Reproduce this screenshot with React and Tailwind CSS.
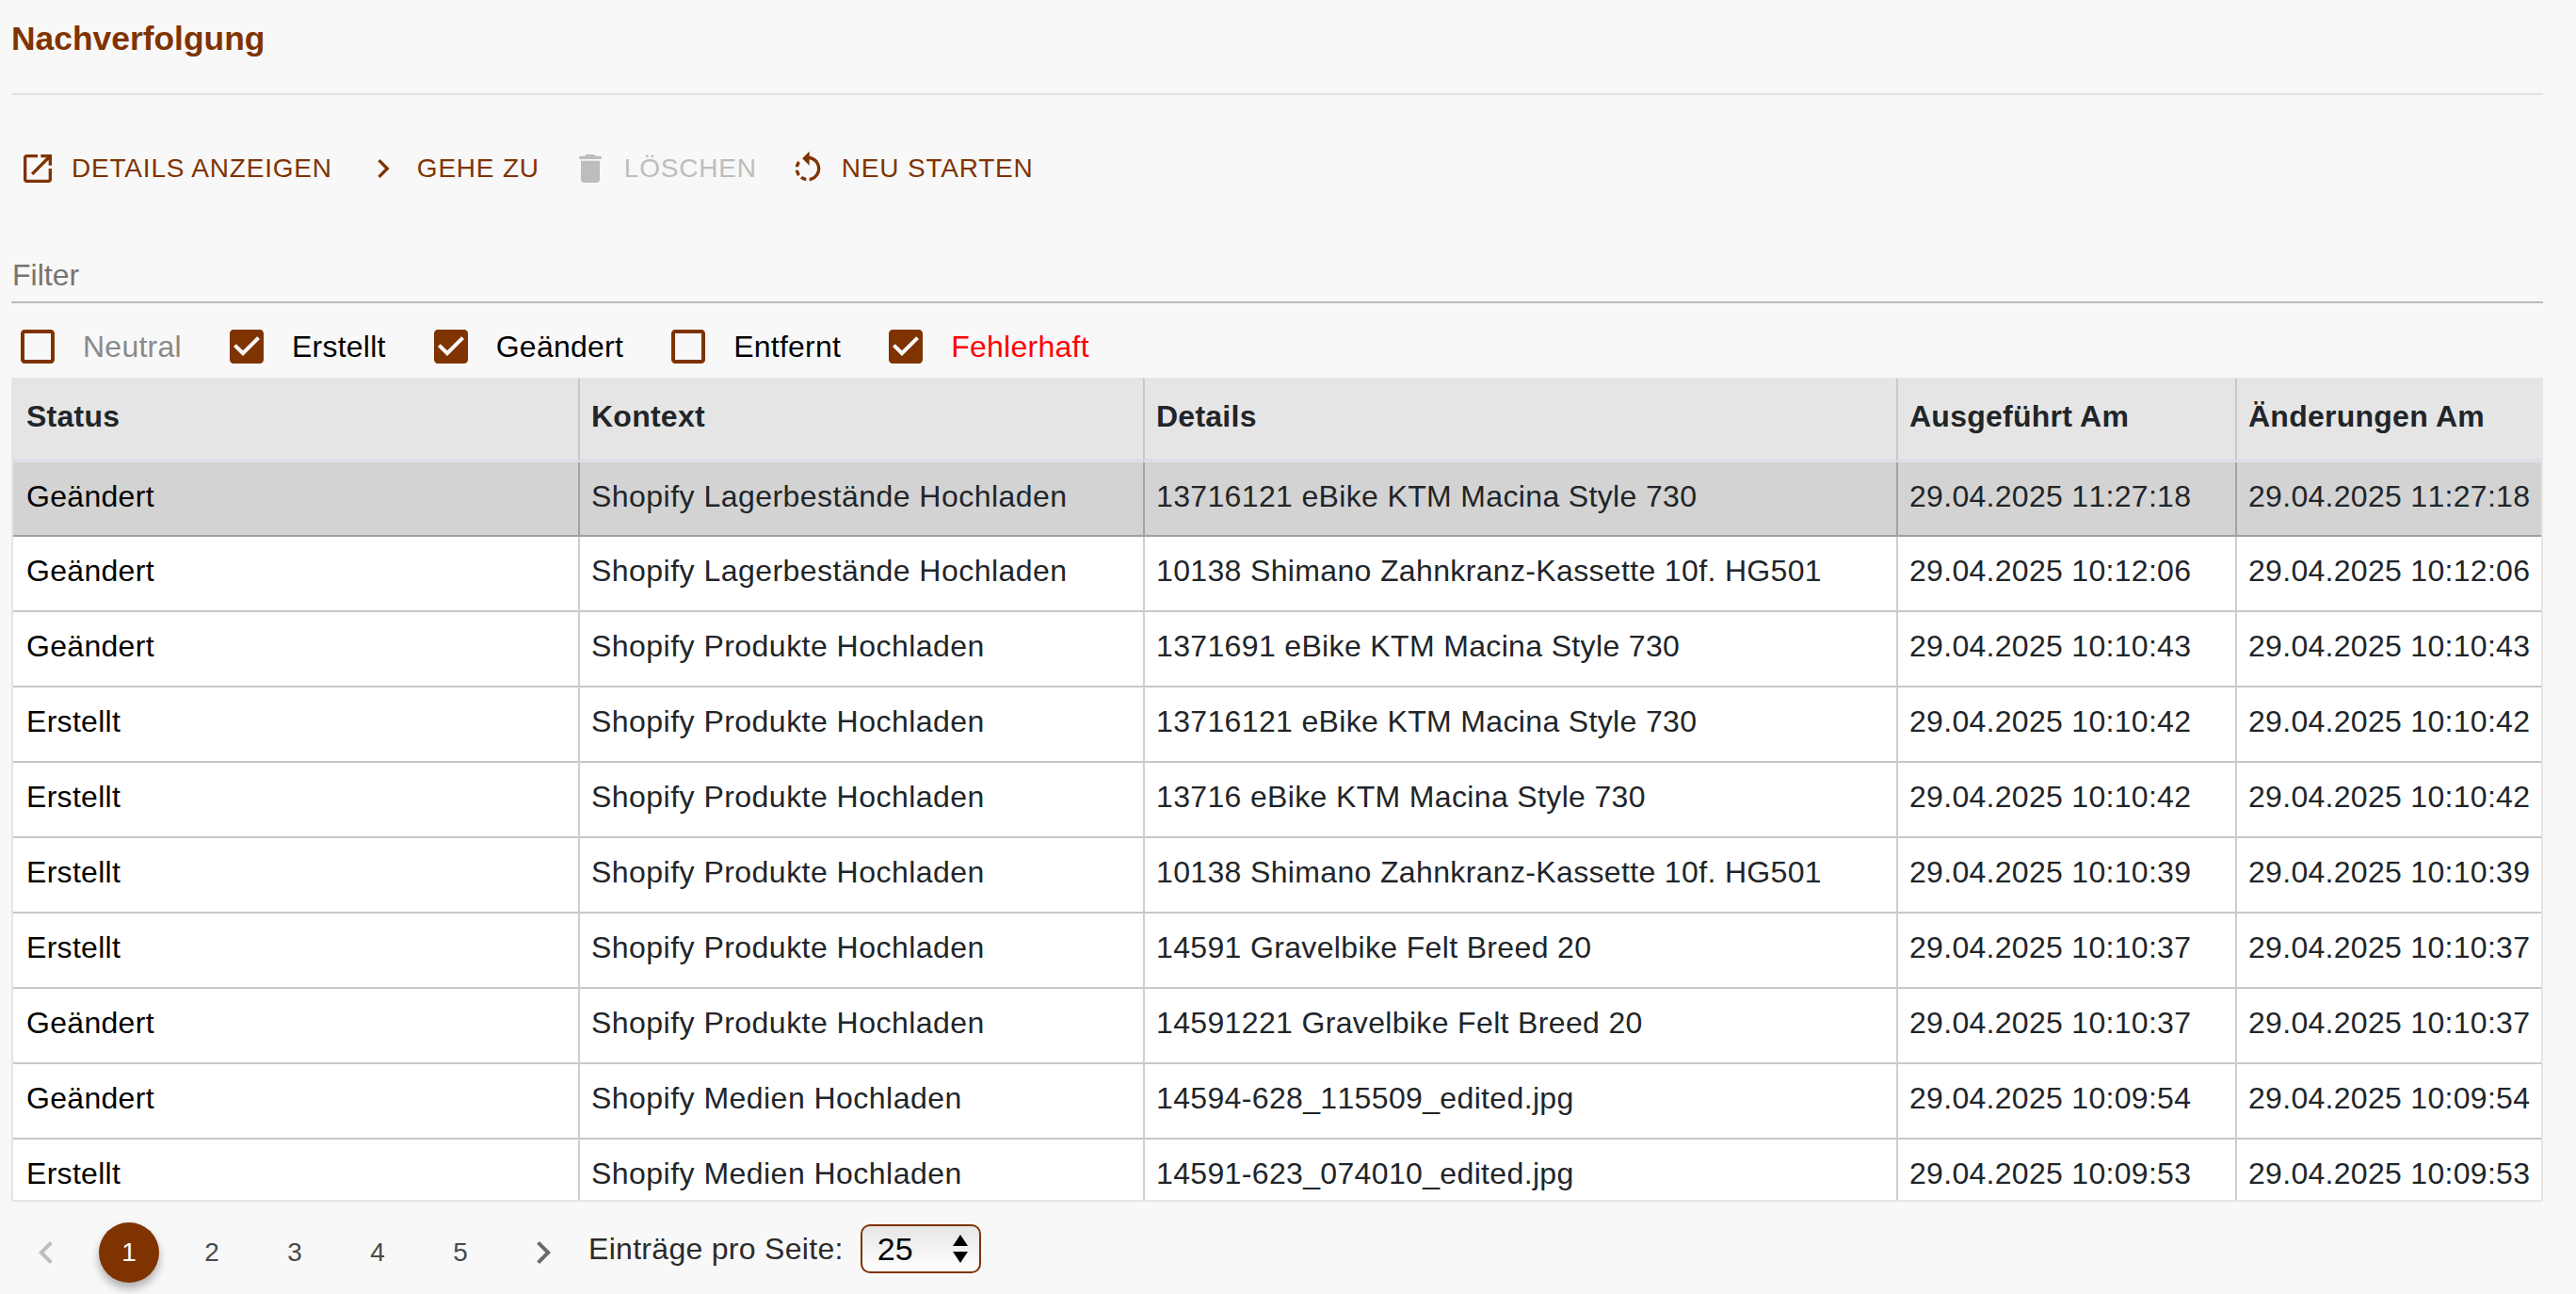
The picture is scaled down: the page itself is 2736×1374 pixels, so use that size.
import React from "react";

const rows = [
  ["Geändert", "Shopify Lagerbestände Hochladen", "13716121 eBike KTM Macina Style 730", "29.04.2025 11:27:18"],
  ["Geändert", "Shopify Lagerbestände Hochladen", "10138 Shimano Zahnkranz-Kassette 10f. HG501", "29.04.2025 10:12:06"],
  ["Geändert", "Shopify Produkte Hochladen", "1371691 eBike KTM Macina Style 730", "29.04.2025 10:10:43"],
  ["Erstellt", "Shopify Produkte Hochladen", "13716121 eBike KTM Macina Style 730", "29.04.2025 10:10:42"],
  ["Erstellt", "Shopify Produkte Hochladen", "13716 eBike KTM Macina Style 730", "29.04.2025 10:10:42"],
  ["Erstellt", "Shopify Produkte Hochladen", "10138 Shimano Zahnkranz-Kassette 10f. HG501", "29.04.2025 10:10:39"],
  ["Erstellt", "Shopify Produkte Hochladen", "14591 Gravelbike Felt Breed 20", "29.04.2025 10:10:37"],
  ["Geändert", "Shopify Produkte Hochladen", "14591221 Gravelbike Felt Breed 20", "29.04.2025 10:10:37"],
  ["Geändert", "Shopify Medien Hochladen", "14594-628_115509_edited.jpg", "29.04.2025 10:09:54"],
  ["Erstellt", "Shopify Medien Hochladen", "14591-623_074010_edited.jpg", "29.04.2025 10:09:53"],
];

const ICONS = {
  open: "M19 19H5V5h7V3H5c-1.11 0-2 .9-2 2v14c0 1.1.89 2 2 2h14c1.1 0 2-.9 2-2v-7h-2v7zM14 3v2h3.59l-9.83 9.83 1.41 1.41L19 6.41V10h2V3h-7z",
  next: "M10 6 8.59 7.41 13.17 12l-4.58 4.59L10 18l6-6z",
  prev: "M15.41 7.41 14 6l-6 6 6 6 1.41-1.41L10.83 12z",
  trash: "M6 19c0 1.1.9 2 2 2h8c1.1 0 2-.9 2-2V7H6v12zM19 4h-3.5l-1-1h-5l-1 1H5v2h14V4z",
  rotate: "M7.11 8.53 5.7 7.11C4.8 8.27 4.24 9.61 4.07 11h2.02c.14-.87.49-1.72 1.02-2.47zM6.09 13H4.07c.17 1.39.72 2.73 1.62 3.89l1.41-1.42c-.52-.75-.87-1.59-1.01-2.47zm1.01 5.32c1.16.9 2.51 1.44 3.9 1.61V17.9c-.87-.15-1.71-.49-2.46-1.03L7.1 18.32zM13 4.07V1L8.45 5.55 13 10V6.09c2.84.48 5 2.94 5 5.91s-2.16 5.43-5 5.91v2.02c3.95-.49 7-3.85 7-7.93s-3.05-7.44-7-7.93z",
  checked: "M19 3H5c-1.11 0-2 .9-2 2v14c0 1.1.89 2 2 2h14c1.11 0 2-.9 2-2V5c0-1.1-.89-2-2-2zm-9 14l-5-5 1.41-1.41L10 14.17l7.59-7.59L19 8l-9 9z",
  blank: "M19 5v14H5V5h14m0-2H5c-1.1 0-2 .9-2 2v14c0 1.1.9 2 2 2h14c1.1 0 2-.9 2-2V5c0-1.1-.9-2-2-2z",
};

const Icon = ({ name, className }) => (
  <svg viewBox="0 0 24 24" fill="currentColor" className={className}>
    <path d={ICONS[name]} />
  </svg>
);

const ToolButton = ({ icon, label, disabled }) => (
  <button
    className={`flex h-[72px] items-center px-4 text-[28px] tracking-[0.8px] uppercase ${
      disabled ? "text-[#bdbdbd]" : "text-[#7f3300]"
    }`}
  >
    <Icon name={icon} className="mr-4 -ml-2 h-10 w-10 shrink-0" />
    {label}
  </button>
);

const FilterCheck = ({ label, checked, textClass }) => (
  <label className="flex items-center gap-6">
    <Icon name={checked ? "checked" : "blank"} className="h-12 w-12 text-[#7f3300]" />
    <span className={`tracking-[0.25px] ${textClass || ""}`}>{label}</span>
  </label>
);

const PageItem = ({ children, active }) => (
  <div
    className={`mx-3 flex h-16 w-16 items-center justify-center rounded-full text-[28px] ${
      active ? "bg-[#7f3300] text-white shadow-[0_6px_10px_rgba(0,0,0,0.3)]" : "text-[#4a4a4a]"
    }`}
  >
    {children}
  </div>
);

const App = () => {
  return (
    <div className="h-[1374px] overflow-hidden bg-[#f8f8f8] pr-[35px] pl-3 font-['Liberation_Sans',Arial,sans-serif] text-[32px] text-black">
      <div className="h-[101px] border-b-2 border-[#e2e2e2] pt-[19px]">
        <h1 className="text-[35.4px] leading-[45px] font-bold text-[#7f3300]">Nachverfolgung</h1>
      </div>

      <div className="mt-[42px] flex gap-[10px]">
        <ToolButton icon="open" label="Details anzeigen" />
        <ToolButton icon="next" label="Gehe zu" />
        <ToolButton icon="trash" label="Löschen" disabled />
        <ToolButton icon="rotate" label="Neu starten" />
      </div>

      <div className="mt-[50px] h-[57px] border-b-2 border-[#bbbbbb] pt-[9px] pl-px leading-[37px] text-[#757575]">
        Filter
      </div>

      <div className="flex h-[79px] items-center gap-[45px] pt-[13px] pl-1">
        <FilterCheck label="Neutral" textClass="text-[#8a8a8a]" />
        <FilterCheck label="Erstellt" checked />
        <FilterCheck label="Geändert" checked />
        <FilterCheck label="Entfernt" />
        <FilterCheck label="Fehlerhaft" checked textClass="text-[#ff0000]" />
      </div>

      <div className="h-[875px] overflow-hidden border-x-2 border-b-2 border-[#e5e5e5] bg-white">
        <table className="w-[2685px] table-fixed border-separate border-spacing-0 whitespace-nowrap">
          <colgroup>
            <col className="w-[600px]" />
            <col className="w-[600px]" />
            <col className="w-[800px]" />
            <col className="w-[360px]" />
            <col className="w-[325px]" />
          </colgroup>
          <thead>
            <tr className="bg-[#e5e5e5] text-left font-bold text-[#212529]">
              {["Status", "Kontext", "Details", "Ausgeführt Am", "Änderungen Am"].map((h, i) => (
                <th
                  key={h}
                  className={`h-[90px] border-t-2 border-b-4 border-t-[#e5e5e5] border-b-[#dcdfe5] pr-0 pb-[6px] font-bold tracking-[0.25px] ${
                    i === 0 ? "pl-[14px]" : "border-l-2 border-l-[#c8c8c8] pl-3"
                  }`}
                >
                  {h}
                </th>
              ))}
            </tr>
          </thead>
          <tbody>
            {rows.map((r, idx) => {
              const selected = idx === 0;
              const cell = `border-b-2 pb-[6px] pl-3 [font-kerning:none] text-[#212529] ${
                selected ? "border-b-[#a0a0a0]" : "border-b-[#c8c8c8]"
              }`;
              const divider = `border-l-2 ${selected ? "border-l-[#a3a3a3]" : "border-l-[#cfcfcf]"}`;
              return (
                <tr key={idx} className={`${selected ? "h-[79px] bg-[#d3d3d3]" : "h-[80px]"}`}>
                  <td className={`${cell} pl-[14px] tracking-[0.3px] text-black`}>{r[0]}</td>
                  <td className={`${cell} ${divider} tracking-[0.47px]`}>{r[1]}</td>
                  <td className={`${cell} ${divider} tracking-[0.35px]`}>{r[2]}</td>
                  <td className={`${cell} ${divider} tracking-[0.3px]`}>{r[3]}</td>
                  <td className={`${cell} ${divider} tracking-[0.3px]`}>{r[3]}</td>
                </tr>
              );
            })}
          </tbody>
        </table>
      </div>

      <div className="-ml-[7px] flex items-center pt-[22px]">
        <PageItem>
          <Icon name="prev" className="h-12 w-12 text-[#bdbdbd]" />
        </PageItem>
        <PageItem active>1</PageItem>
        <PageItem>2</PageItem>
        <PageItem>3</PageItem>
        <PageItem>4</PageItem>
        <PageItem>5</PageItem>
        <PageItem>
          <Icon name="next" className="h-12 w-12 text-[#6b6b6b]" />
        </PageItem>
        <span className="mb-2 ml-1 tracking-[0.3px] text-[#2b2b2b]">Einträge pro Seite:</span>
        <div className="mb-2 ml-[18px] flex h-[52px] w-[128px] items-center justify-between rounded-[10px] border-2 border-[#7f3300] bg-gradient-to-b from-[#e6e6e6] to-white pr-3 pl-[16px] text-[34px]">
          <span>25</span>
          <svg viewBox="0 0 16 30" fill="black" className="h-[30px] w-4">
            <path d="M8 0 16 12H0zM8 30 0 18h16z" />
          </svg>
        </div>
      </div>
    </div>
  );
};

export default App;
